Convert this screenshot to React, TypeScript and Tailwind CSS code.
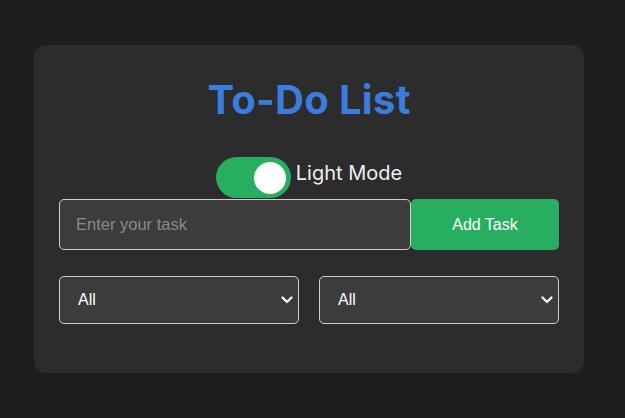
import React from "react";

function Chevron() {
  return (
    <svg width="12" height="8" viewBox="0 0 12 8" className="pointer-events-none absolute right-[5px] top-1/2 -translate-y-1/2" fill="none">
      <path d="M1.5 1.5 L6 6 L10.5 1.5" stroke="#ffffff" strokeWidth="2.2" strokeLinecap="round" strokeLinejoin="round" />
    </svg>
  );
}

function Sel() {
  return (
    <div className="relative w-[240px] h-[48px] rounded-[5px] border border-[#cfcfcf] bg-[#3c3c3c] flex items-center pl-[18px]">
      <span className="text-[16px] text-white">All</span>
      <Chevron />
    </div>
  );
}

export default function App() {
  return (
    <div className="min-h-screen w-full bg-[#1e1e1e] flex justify-center pt-[45px] pr-[7px]" style={{ fontFamily: '"Liberation Sans", Arial, sans-serif' }}>
      <div className="w-[550px] h-[328px] rounded-[12px] bg-[#2c2c2c] px-[25px] pt-[31px] flex flex-col">
        <h1 className="text-center text-[40px] leading-[48px] font-bold text-[#3b7ddd] tracking-[0.3px]" style={{ fontFamily: 'Inter, "Open Sans", sans-serif' }}>
          To-Do List
        </h1>
        <div className="mt-[33px] flex items-center justify-center gap-[5px]">
          <div className="w-[75px] h-[41px] rounded-full bg-[#27ae60] flex items-center justify-end pr-[5px]">
            <div className="w-[32px] h-[32px] rounded-full bg-white" />
          </div>
          <span className="mb-[9px] text-[20px] text-[#f0f0f0]" style={{ fontFamily: 'Inter, "Open Sans", sans-serif' }}>Light Mode</span>
        </div>
        <div className="mt-[1px] flex">
          <div className="w-[352px] h-[51px] rounded-[5px] border border-[#cfcfcf] bg-[#3c3c3c] flex items-center pl-[16px]">
            <span className="text-[16.5px] text-[#8a8a8a]">Enter your task</span>
          </div>
          <div className="w-[148px] h-[51px] rounded-[5px] bg-[#27ae60] flex items-center justify-center">
            <span className="text-[16px] text-white">Add Task</span>
          </div>
        </div>
        <div className="mt-[26px] flex justify-between">
          <Sel />
          <Sel />
        </div>
      </div>
    </div>
  );
}
